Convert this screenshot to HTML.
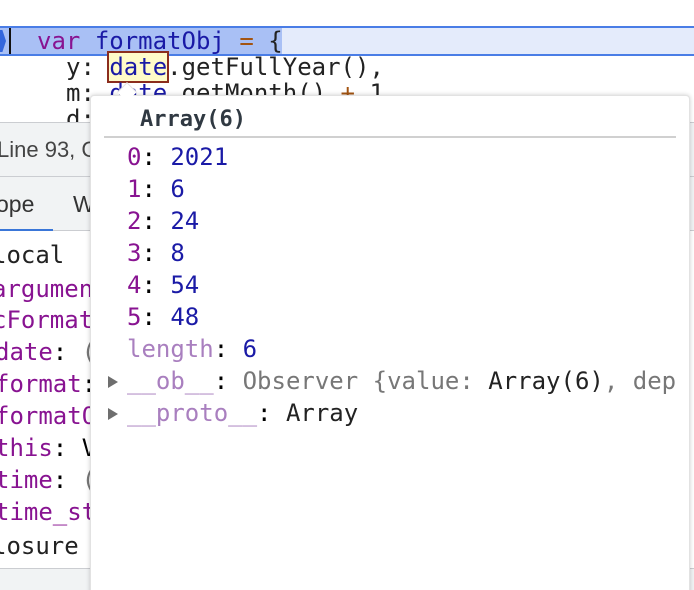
<!DOCTYPE html>
<html><head><meta charset="utf-8"><style>
*{margin:0;padding:0;box-sizing:border-box}
html,body{width:694px;height:590px;overflow:hidden}
body{background:#fff;position:relative;font-family:"DejaVu Sans Mono","Liberation Mono",monospace;font-size:24px}
.a{position:absolute;white-space:pre;line-height:32px}
.p{color:#881391}.b{color:#1a1aa6}.k{color:#222}.o{color:#a35412}.l{color:#a97fbf}.g{color:#777}
.s{font-family:"Liberation Sans",sans-serif}
</style></head><body>
<div style="position:absolute;left:0;top:26px;width:694px;height:30px;background:#e4ebfb;border-top:2px solid #4a7de6;border-bottom:2px solid #4a7de6"></div>
<div style="position:absolute;left:0;top:28px;width:282px;height:26px;background:#a9c0f5"></div>
<div style="position:absolute;left:0;top:30px;width:6px;height:22px;background:#3366dd;clip-path:polygon(0 0,40% 0,100% 50%,40% 100%,0 100%)"></div>
<div style="position:absolute;left:9px;top:28px;width:2px;height:26px;background:#111"></div>
<div class="a" style="left:37px;top:25px"><span class="p">var</span> <span class="b">formatObj</span> <span class="o">=</span> <span class="k">{</span></div>
<div class="a k" style="left:66px;top:51px">y: <span class="b" style="background:#fffbc8;outline:2px solid #8b2d1d">date</span>.getFullYear(),</div>
<div class="a k" style="left:66px;top:77px">m: <span class="b">date</span>.getMonth() <span class="o">+</span> 1,</div>
<div class="a k" style="left:66px;top:103px">d:</div>
<div style="position:absolute;left:0;top:122px;width:694px;height:108px;background:#f1f3f4;border-top:1px solid #cbcdd1"></div>
<div style="position:absolute;left:0;top:176px;width:694px;height:1px;background:#cbcdd1"></div>
<div style="position:absolute;left:0;top:230px;width:694px;height:1px;background:#cbcdd1"></div>
<div style="position:absolute;left:0;top:229px;width:53px;height:2px;background:#3a76d8"></div>
<div class="a s" style="left:-3px;top:134px;font-size:22px;color:#444">Line 93, C</div>
<div class="a s" style="left:-4px;top:188px;font-size:23px;color:#333">ope</div>
<div class="a s" style="left:73px;top:188px;font-size:23px;color:#333">W</div>
<div class="a k" style="left:-8px;top:239px">local</div>
<div class="a p" style="left:-8px;top:273px">argumen</div>
<div class="a p" style="left:-8px;top:304px">cFormat</div>
<div class="a" style="left:-5px;top:336px"><span class="p">date</span>: <span class="g">(</span></div>
<div class="a" style="left:-5px;top:368px"><span class="p">format</span>:</div>
<div class="a p" style="left:-5px;top:400px">formatO</div>
<div class="a" style="left:-5px;top:432px"><span class="p">this</span>: V</div>
<div class="a" style="left:-5px;top:464px"><span class="p">time</span>: <span class="g">(</span></div>
<div class="a p" style="left:-5px;top:496px">time_st</div>
<div class="a k" style="left:-8px;top:530px">losure</div>
<div style="position:absolute;left:0;top:568px;width:694px;height:22px;background:#f1f3f4;border-top:1px solid #cbcdd1"></div>
<div style="position:absolute;left:90px;top:95px;width:600px;height:520px;background:#fff;border:1px solid #e2e2e2;border-radius:4px;box-shadow:0 0 5px rgba(0,0,0,.2)"></div>
<div style="position:absolute;left:120px;top:85px;width:14px;height:14px;background:#fff;transform:rotate(45deg);border-left:1px solid #e2e2e2;border-top:1px solid #e2e2e2"></div>
<div class="a" style="left:140px;top:104px;font-weight:bold;color:#303942;font-size:22px">Array(6)</div>
<div style="position:absolute;left:104px;top:136px;width:572px;height:2px;background:#d0d0d0"></div>
<div class="a" style="left:127px;top:141px"><span class="p">0</span>: <span class="b">2021</span></div>
<div class="a" style="left:127px;top:173px"><span class="p">1</span>: <span class="b">6</span></div>
<div class="a" style="left:127px;top:205px"><span class="p">2</span>: <span class="b">24</span></div>
<div class="a" style="left:127px;top:237px"><span class="p">3</span>: <span class="b">8</span></div>
<div class="a" style="left:127px;top:269px"><span class="p">4</span>: <span class="b">54</span></div>
<div class="a" style="left:127px;top:301px"><span class="p">5</span>: <span class="b">48</span></div>
<div class="a" style="left:127px;top:333px"><span class="l">length</span>: <span class="b">6</span></div>
<div style="position:absolute;left:108px;top:376px;border-left:10px solid #6e6e6e;border-top:6px solid transparent;border-bottom:6px solid transparent"></div>
<div class="a" style="left:127px;top:365px"><span class="l">__ob__</span>: <span class="g">Observer {value: <span class="k">Array(6)</span>, dep</span></div>
<div style="position:absolute;left:108px;top:408px;border-left:10px solid #6e6e6e;border-top:6px solid transparent;border-bottom:6px solid transparent"></div>
<div class="a" style="left:127px;top:397px"><span class="l">__proto__</span>: <span class="k">Array</span></div>
</body></html>
